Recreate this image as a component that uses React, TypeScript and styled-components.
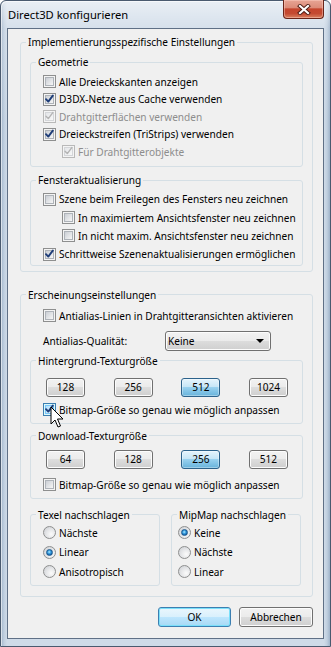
import React from "react";
import styled, { createGlobalStyle } from "styled-components";

const GlobalStyle = createGlobalStyle`
  *, *::before, *::after { box-sizing: border-box; }
  html, body { margin: 0; padding: 0; background: #ffffff; }
  body {
    font-family: "Noto Sans", "Open Sans", sans-serif;
    font-size: 10.1px;
    color: #000;
  }
`;

const Window = styled.div`
  position: relative;
  width: 331px;
  height: 647px;
  display: flex;
  flex-direction: column;
  padding: 0 6px 7px 6px;
  border: 1px solid #4a5a6f;
  border-radius: 6px 6px 0 0;
  background:
    linear-gradient(180deg, rgba(255, 255, 255, 0.55) 0px, rgba(255, 255, 255, 0.15) 27px, rgba(255, 255, 255, 0) 120px),
    linear-gradient(90deg, #9fb3ca 0px, #c0cfdf 3px, #cfdbe8 6px, #cfdbe8 calc(100% - 6px), #c0cfdf calc(100% - 3px), #9fb3ca 100%),
    #c9d7e6;
  box-shadow: inset 1px 1px 0 rgba(255, 255, 255, 0.6);
`;

const TitleBar = styled.div`
  height: 27px;
  display: flex;
  align-items: flex-start;
  justify-content: space-between;
  flex: none;
`;

const Title = styled.div`
  padding: 6px 0 0 1px;
  font-size: 11.2px;
  line-height: 16px;
  color: #000;
`;

const CloseButton = styled.div`
  width: 41px;
  height: 19px;
  margin-top: -1px;
  border: 1px solid #6a2418;
  border-top: none;
  border-radius: 0 0 4px 4px;
  background: linear-gradient(180deg, #e7a595 0%, #dc8c79 42%, #c5452d 50%, #c44a31 75%, #d9805f 100%);
  box-shadow: inset 0 0 0 1px rgba(255, 210, 200, 0.45);
  display: flex;
  align-items: center;
  justify-content: center;
`;

const Client = styled.div`
  flex: 1;
  border: 1px solid #5f7086;
  background: #f0f0f0;
  padding: 0 10px 0 12px;
  display: flex;
  flex-direction: column;
`;

const Group = styled.fieldset<{ $mt: number }>`
  margin: ${(p) => p.$mt}px 0 0 0;
  padding: 0;
  min-width: 0;
  border: 1px solid #d5dfe5;
  border-radius: 3px;
`;

const Legend = styled.legend`
  margin-left: 5px;
  padding: 0 2px;
  line-height: 14px;
  font-size: 10.1px;
  color: #000;
`;

const GroupBody = styled.div<{ $pad: string }>`
  padding: ${(p) => p.$pad};
  display: flex;
  flex-direction: column;
`;

const Row = styled.div<{ $indent?: number; $h?: number; $mt?: number }>`
  height: ${(p) => p.$h ?? 17.5}px;
  margin-top: ${(p) => p.$mt ?? 0}px;
  padding-left: ${(p) => p.$indent ?? 0}px;
  display: flex;
  align-items: center;
  white-space: nowrap;
`;

const Label = styled.span<{ $disabled?: boolean }>`
  margin-left: 3px;
  color: ${(p) => (p.$disabled ? "#8d8d8d" : "#000")};
`;

const CheckBox = styled.span<{ $disabled?: boolean; $hot?: boolean }>`
  position: relative;
  flex: none;
  width: 13px;
  height: 13px;
  padding: 1px;
  border: 1px solid ${(p) => (p.$hot ? "#3c7fb1" : p.$disabled ? "#b9b9b9" : "#8e8f8f")};
  background: ${(p) => (p.$hot ? "#def9fa" : "#f4f4f4")};
  display: flex;
`;

const CheckInner = styled.span<{ $disabled?: boolean; $hot?: boolean }>`
  flex: 1;
  border: 1px solid ${(p) => (p.$hot ? "#79c6f9" : p.$disabled ? "#d4d6d9" : "#aeb3b9")};
  background: ${(p) =>
    p.$hot
      ? "linear-gradient(135deg, #b1dffd, #e9f7fe)"
      : p.$disabled
      ? "linear-gradient(135deg, #e4e6e9, #f7f7f7)"
      : "linear-gradient(135deg, #cbcfd5, #f6f6f6)"};
`;

const CheckMark = styled.svg`
  position: absolute;
  left: 0;
  top: 0;
  width: 11px;
  height: 11px;
`;

const RadioCircle = styled.span<{ $on?: boolean }>`
  flex: none;
  width: 13px;
  height: 13px;
  border-radius: 50%;
  border: 1px solid #8e8f8f;
  background: radial-gradient(circle at 65% 65%, #fbfbfb 0%, #e6e7e9 45%, #c9ccd1 100%);
  display: flex;
  align-items: center;
  justify-content: center;
  &::after {
    content: "";
    display: ${(p) => (p.$on ? "block" : "none")};
    width: 7px;
    height: 7px;
    border-radius: 50%;
    border: 1px solid #1d5a8e;
    background: radial-gradient(circle at 45% 40%, #b8ecff 0%, #3fa5e3 35%, #0f5ea8 75%, #0b3d73 100%);
  }
`;

const Button = styled.div<{ $w: number; $h: number; $state?: "on" | "default" }>`
  width: ${(p) => p.$w}px;
  height: ${(p) => p.$h}px;
  flex: none;
  border-radius: 3px;
  border: 1px solid ${(p) => (p.$state === "on" ? "#2c628b" : p.$state === "default" ? "#3c7fb1" : "#707070")};
  background: ${(p) =>
    p.$state === "on"
      ? "linear-gradient(180deg, #e5f4fc 0%, #c4e5f6 50%, #98d1ef 50%, #68b3db 100%)"
      : p.$state === "default"
      ? "linear-gradient(180deg, #eaf6fd 0%, #d9f0fc 50%, #bee6fd 50%, #a7d9f5 100%)"
      : "linear-gradient(180deg, #f2f2f2 0%, #ebebeb 50%, #dddddd 50%, #cfcfcf 100%)"};
  box-shadow: inset 0 0 0 1px ${(p) => (p.$state === "default" ? "#7be0fa" : p.$state === "on" ? "rgba(255,255,255,0.35)" : "#fcfcfc")};
  display: flex;
  align-items: center;
  justify-content: center;
  color: #000;
`;

const ButtonStrip = styled.div<{ $mt: number }>`
  margin-top: ${(p) => p.$mt}px;
  padding: 0 14px 0 15px;
  display: flex;
  justify-content: space-between;
`;

const QualityRow = styled.div`
  margin-top: 6.5px;
  height: 20px;
  padding-left: 13px;
  display: flex;
  align-items: center;
`;

const QualityLabel = styled.span`
  width: 122px;
  flex: none;
`;

const Select = styled.div`
  width: 106px;
  height: 20px;
  border: 1px solid #707070;
  border-radius: 3px;
  background: linear-gradient(180deg, #f2f2f2 0%, #ebebeb 50%, #dddddd 50%, #cfcfcf 100%);
  box-shadow: inset 0 0 0 1px #fcfcfc;
  padding: 0 6px 0 2px;
  display: flex;
  align-items: center;
  justify-content: space-between;
`;

const Arrow = styled.span`
  width: 0;
  height: 0;
  border-left: 4px solid transparent;
  border-right: 4px solid transparent;
  border-top: 4px solid #000;
`;

const LookupGrid = styled.div`
  margin-top: 9px;
  display: grid;
  grid-template-columns: 130px 130px;
  column-gap: 11px;
`;

const Footer = styled.div`
  margin-top: 10px;
  display: flex;
  justify-content: flex-end;
  gap: 8px;
`;

const Cursor = styled.svg`
  position: absolute;
  left: 49px;
  top: 405px;
  width: 14px;
  height: 23px;
  pointer-events: none;
`;

function Check({ checked, disabled, hot }: { checked?: boolean; disabled?: boolean; hot?: boolean }) {
  return (
    <CheckBox $disabled={disabled} $hot={hot}>
      <CheckInner $disabled={disabled} $hot={hot} />
      {checked && (
        <CheckMark viewBox="0 0 11 11">
          <path
            d="M2 5.2 L4.3 7.6 L8.8 1.6"
            fill="none"
            stroke={disabled ? "#b4b4b4" : "#1e3d78"}
            strokeWidth={disabled ? 1.4 : 1.9}
            strokeLinecap="round"
            strokeLinejoin="round"
          />
        </CheckMark>
      )}
    </CheckBox>
  );
}

function CheckRow(props: {
  text: string;
  checked?: boolean;
  disabled?: boolean;
  hot?: boolean;
  indent?: number;
  h?: number;
  mt?: number;
}) {
  return (
    <Row $indent={props.indent} $h={props.h} $mt={props.mt}>
      <Check checked={props.checked} disabled={props.disabled} hot={props.hot} />
      <Label $disabled={props.disabled}>{props.text}</Label>
    </Row>
  );
}

function RadioRow({ text, on }: { text: string; on?: boolean }) {
  return (
    <Row $h={19.5}>
      <RadioCircle $on={on} />
      <Label>{text}</Label>
    </Row>
  );
}

export default function App() {
  return (
    <>
      <GlobalStyle />
      <Window>
        <TitleBar>
          <Title>Direct3D konfigurieren</Title>
          <CloseButton>
            <svg width="14" height="11" viewBox="0 0 14 11">
              <path d="M3 2 L11 9 M11 2 L3 9" stroke="#4a1a12" strokeWidth="4" strokeLinecap="square" />
              <path d="M3 2 L11 9 M11 2 L3 9" stroke="#ffffff" strokeWidth="2.2" strokeLinecap="square" />
            </svg>
          </CloseButton>
        </TitleBar>
        <Client>
          <Group $mt={6}>
            <Legend>Implementierungsspezifische Einstellungen</Legend>
            <GroupBody $pad="6px 9px 5px 9px">
              <Group $mt={0}>
                <Legend>Geometrie</Legend>
                <GroupBody $pad="4px 0 5.5px 12px">
                  <CheckRow text="Alle Dreieckskanten anzeigen" />
                  <CheckRow text="D3DX-Netze aus Cache verwenden" checked />
                  <CheckRow text="Drahtgitterflächen verwenden" checked disabled />
                  <CheckRow text="Dreieckstreifen (TriStrips) verwenden" checked />
                  <CheckRow text="Für Drahtgitterobjekte" checked disabled indent={19} />
                </GroupBody>
              </Group>
              <Group $mt={6}>
                <Legend>Fensteraktualisierung</Legend>
                <GroupBody $pad="3px 0 1.4px 12px">
                  <CheckRow text="Szene beim Freilegen des Fensters neu zeichnen" h={18.4} />
                  <CheckRow text="In maximiertem Ansichtsfenster neu zeichnen" indent={19} h={18.4} />
                  <CheckRow text="In nicht maxim. Ansichtsfenster neu zeichnen" indent={19} h={18.4} />
                  <CheckRow text="Schrittweise Szenenaktualisierungen ermöglichen" checked h={18.4} />
                </GroupBody>
              </Group>
            </GroupBody>
          </Group>

          <Group $mt={16}>
            <Legend>Erscheinungseinstellungen</Legend>
            <GroupBody $pad="5px 9px 10px 9px">
              <CheckRow text="Antialias-Linien in Drahtgitteransichten aktivieren" indent={13} />
              <QualityRow>
                <QualityLabel>Antialias-Qualität:</QualityLabel>
                <Select>
                  <span>Keine</span>
                  <Arrow />
                </Select>
              </QualityRow>
              <Group $mt={3}>
                <Legend>Hintergrund-Texturgröße</Legend>
                <GroupBody $pad="0 0 4.25px 0">
                  <ButtonStrip $mt={10}>
                    <Button $w={39} $h={19}>128</Button>
                    <Button $w={39} $h={19}>256</Button>
                    <Button $w={39} $h={19} $state="on">512</Button>
                    <Button $w={39} $h={19}>1024</Button>
                  </ButtonStrip>
                  <CheckRow text="Bitmap-Größe so genau wie möglich anpassen" checked hot indent={12} mt={4.25} />
                </GroupBody>
              </Group>
              <Group $mt={5}>
                <Legend>Download-Texturgröße</Legend>
                <GroupBody $pad="0 0 4.25px 0">
                  <ButtonStrip $mt={7}>
                    <Button $w={39} $h={19}>64</Button>
                    <Button $w={39} $h={19}>128</Button>
                    <Button $w={39} $h={19} $state="on">256</Button>
                    <Button $w={39} $h={19}>512</Button>
                  </ButtonStrip>
                  <CheckRow text="Bitmap-Größe so genau wie möglich anpassen" indent={12} mt={7.25} />
                </GroupBody>
              </Group>
              <LookupGrid>
                <Group $mt={0}>
                  <Legend>Texel nachschlagen</Legend>
                  <GroupBody $pad="1.25px 0 3.25px 12px">
                    <RadioRow text="Nächste" />
                    <RadioRow text="Linear" on />
                    <RadioRow text="Anisotropisch" />
                  </GroupBody>
                </Group>
                <Group $mt={0}>
                  <Legend>MipMap nachschlagen</Legend>
                  <GroupBody $pad="1.25px 0 3.25px 6px">
                    <RadioRow text="Keine" on />
                    <RadioRow text="Nächste" />
                    <RadioRow text="Linear" />
                  </GroupBody>
                </Group>
              </LookupGrid>
            </GroupBody>
          </Group>

          <Footer>
            <Button $w={73} $h={20} $state="default">OK</Button>
            <Button $w={74} $h={20}>Abbrechen</Button>
          </Footer>
        </Client>
        <Cursor viewBox="0 0 14 23">
          <path
            d="M1 1 L1 18 L5 14 L8 21 L10.5 20 L7.5 13 L13 13 Z"
            fill="#ffffff"
            stroke="#000000"
            strokeWidth="1"
            strokeLinejoin="miter"
          />
        </Cursor>
      </Window>
    </>
  );
}
